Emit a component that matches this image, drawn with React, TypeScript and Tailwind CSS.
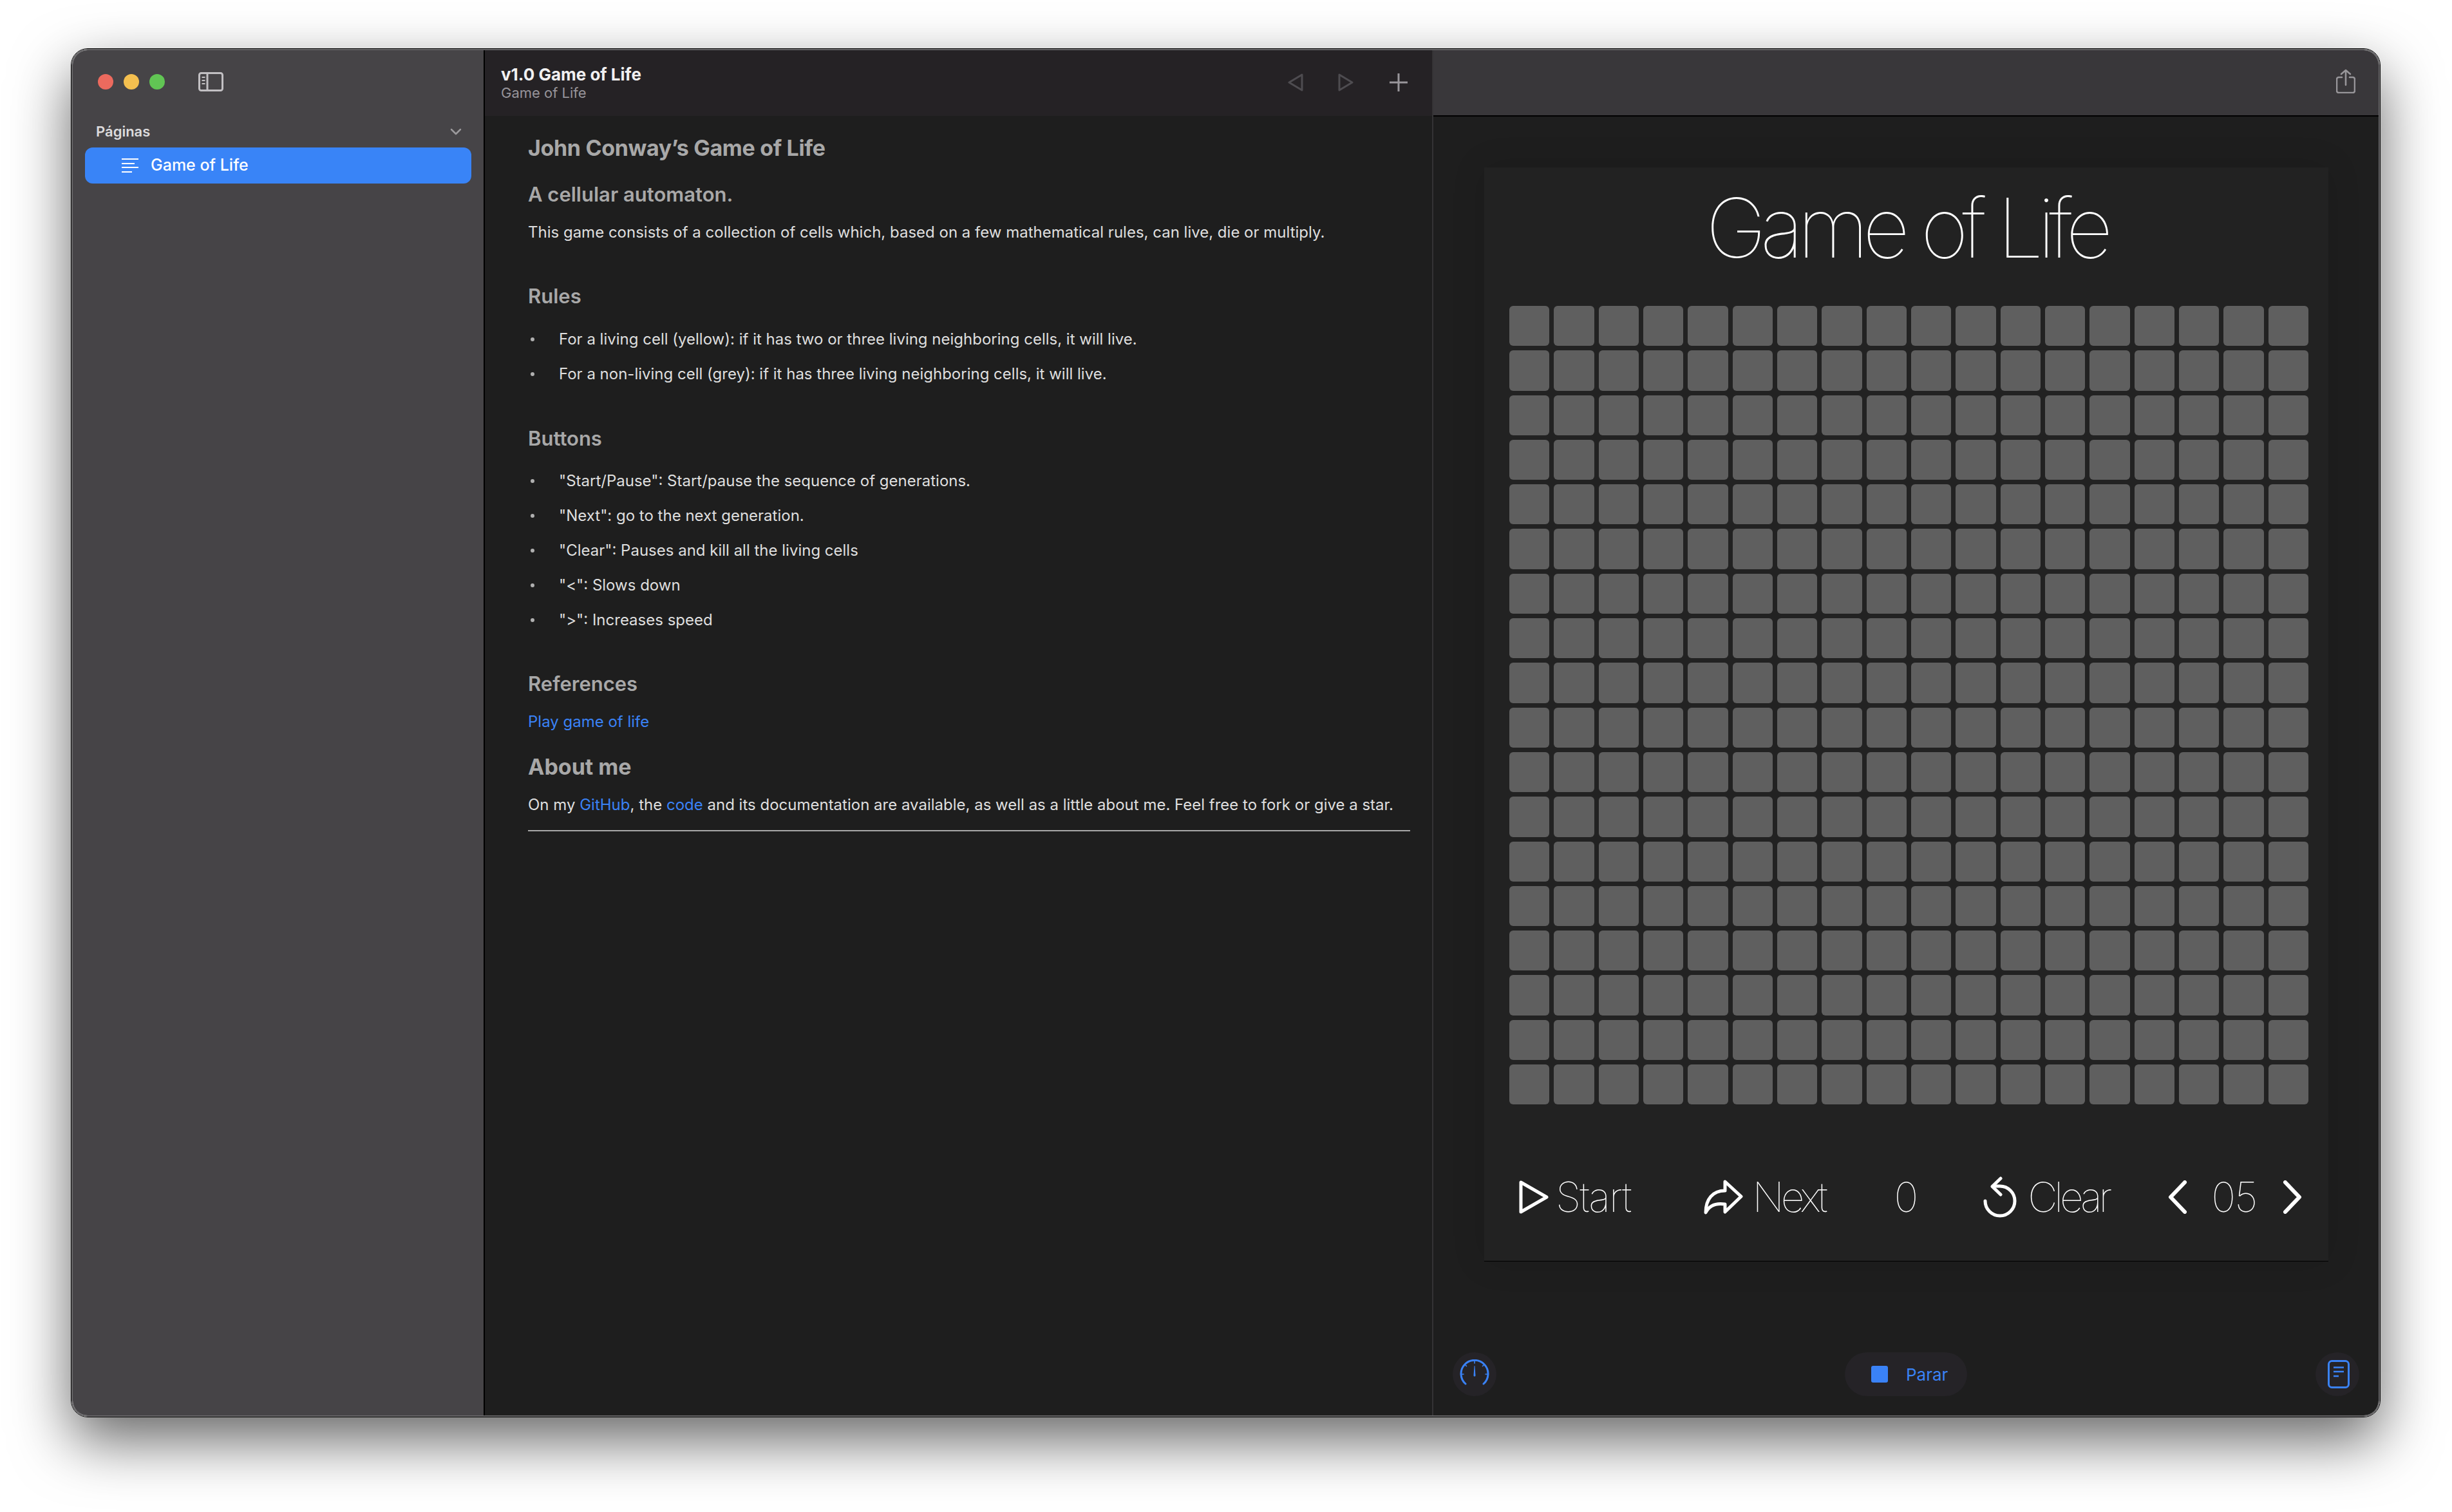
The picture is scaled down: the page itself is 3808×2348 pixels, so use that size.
const bullets1 = [
  "For a living cell (yellow): if it has two or three living neighboring cells, it will live.",
  "For a non-living cell (grey): if it has three living neighboring cells, it will live.",
];

const bullets2 = [
  '"Start/Pause": Start/pause the sequence of generations.',
  '"Next": go to the next generation.',
  '"Clear": Pauses and kill all the living cells',
  '"<": Slows down',
  '">": Increases speed',
];

const cells = Array.from({ length: 18 * 18 }, (_, i) => i);

const BulletList = ({ items, className }: { items: string[]; className: string }) => (
  <ul className={className}>
    {items.map((item) => (
      <li key={item} className="flex items-center h-[54px]">
        <span className="w-[6px] h-[6px] ml-[4px] rounded-full bg-[#b0b0b0]" />
        <span className="ml-[38px]">{item}</span>
      </li>
    ))}
  </ul>
);

const Sidebar = () => (
  <div className="w-[640px] shrink-0 bg-[#464447] border-r-[2px] border-black flex flex-col">
    <div className="flex items-center h-[30px] mt-[34px] ml-[39px]">
      <span className="w-[24px] h-[24px] rounded-full bg-[#ec6a5e]" />
      <span className="w-[24px] h-[24px] rounded-full bg-[#f4bf4f] ml-[16px]" />
      <span className="w-[24px] h-[24px] rounded-full bg-[#61c554] ml-[16px]" />
      <svg className="ml-[52px]" width="39" height="30" viewBox="0 0 39 30" fill="none" stroke="#c2c0c3" strokeWidth="3">
        <rect x="1.5" y="1.5" width="36" height="27" rx="3" />
        <path d="M14 2v26" />
        <path d="M5.5 8h5M5.5 13h5M5.5 18h5" strokeWidth="2" />
      </svg>
    </div>
    <div className="flex items-center justify-between mt-[50px] ml-[36px] mr-[34px] h-[24px]">
      <span className="text-[22px] font-semibold text-[#dcdbdc]">Páginas</span>
      <svg width="18" height="11" viewBox="0 0 18 11" fill="none" stroke="#9b999c" strokeWidth="2.5" strokeLinecap="round" strokeLinejoin="round">
        <path d="M2 2l7 7 7-7" />
      </svg>
    </div>
    <div className="flex items-center h-[56px] mt-[13px] mx-[19px] rounded-[12px] bg-[#3984f7] pl-[57px]">
      <svg width="26" height="22" viewBox="0 0 26 22" fill="none" stroke="#ffffff" strokeWidth="2">
        <path d="M0 1h26M0 8h20M0 14h26M0 21h16" />
      </svg>
      <span className="ml-[19px] text-[25px] font-medium text-white">Game of Life</span>
    </div>
  </div>
);

const Doc = () => (
  <div className="w-[1473px] shrink-0 flex flex-col border-r-[2px] border-[#343335]">
    <div className="h-[102px] bg-[#252225] flex items-center justify-between pl-[25px] pr-[38px]">
      <div className="flex flex-col">
        <span className="text-[26px] leading-[30px] font-bold text-[#f1f0f1]">v1.0 Game of Life</span>
        <span className="text-[22px] leading-[27px] text-[#97949a]">Game of Life</span>
      </div>
      <div className="flex items-center -mt-[3px]">
        <svg width="24" height="28" viewBox="0 0 24 28" fill="none" stroke="#4e4c50" strokeWidth="3" strokeLinejoin="round">
          <path d="M22 2v24L2 14z" />
        </svg>
        <svg className="ml-[54px]" width="24" height="28" viewBox="0 0 24 28" fill="none" stroke="#4e4c50" strokeWidth="3" strokeLinejoin="round">
          <path d="M2 2v24l20-12z" />
        </svg>
        <svg className="ml-[56px]" width="28" height="28" viewBox="0 0 28 28" fill="none" stroke="#99969b" strokeWidth="3">
          <path d="M14 0v28M0 14h28" />
        </svg>
      </div>
    </div>
    <div className="flex-1 bg-[#1e1e1e] pl-[67px] pr-[34px] pt-[30px] text-[24px] leading-[40px] text-[#dfdfdf]">
      <h1 className="text-[34px] font-bold tracking-[-0.01em] text-[#a8a8a8]">John Conway’s Game of Life</h1>
      <h3 className="mt-[32px] text-[31px] font-semibold text-[#a8a8a8]">A cellular automaton.</h3>
      <p className="mt-[19px]">
        This game consists of a collection of cells which, based on a few mathematical rules, can live, die or multiply.
      </p>
      <h3 className="mt-[59px] text-[31px] font-semibold text-[#a8a8a8]">Rules</h3>
      <BulletList items={bullets1} className="mt-[20px]" />
      <h3 className="mt-[53px] text-[31px] font-semibold text-[#a8a8a8]">Buttons</h3>
      <BulletList items={bullets2} className="mt-[19px]" />
      <h3 className="mt-[52px] text-[31px] font-semibold text-[#a8a8a8]">References</h3>
      <p className="mt-[19px] text-[#3a82f6]">Play game of life</p>
      <h2 className="mt-[30px] text-[34px] font-bold text-[#a8a8a8]">About me</h2>
      <p className="mt-[19px]">
        On my <span className="text-[#3a82f6]">GitHub</span>, the <span className="text-[#3a82f6]">code</span> and its
        documentation are available, as well as a little about me. Feel free to fork or give a star.
      </p>
      <div className="mt-[19px] h-[2px] bg-[#a8a8a8]" />
    </div>
  </div>
);

const Controls = () => (
  <div className="flex items-center h-[100px] mt-[94px] ml-[54px] text-[64px] font-thin text-white">
    <svg width="46" height="52" viewBox="0 0 46 52" fill="none" stroke="#ffffff" strokeWidth="5" strokeLinejoin="round">
      <path d="M3 3v46l40-23z" />
    </svg>
    <span className="ml-[11px] tracking-[-0.03em]">Start</span>
    <svg className="ml-[114px]" width="61" height="54" viewBox="0 0 61 54" fill="none" stroke="#ffffff" strokeWidth="5" strokeLinejoin="round" strokeLinecap="round">
      <path d="M33 3l25 23-25 24V38C20 36 9 39 3 51 3 30 14 17 33 17z" />
    </svg>
    <span className="ml-[14px] tracking-[-0.08em]">Next</span>
    <span className="ml-[108px] tracking-[-0.05em]">0</span>
    <svg className="ml-[104px]" width="52" height="64" viewBox="0 0 52 64" fill="none" stroke="#ffffff" strokeWidth="5" strokeLinecap="round" strokeLinejoin="round">
      <path d="M27 3L14 15.5 27 28" />
      <path d="M15 15h11a23 23 0 1 1-23 23" />
    </svg>
    <span className="ml-[17px] tracking-[-0.08em]">Clear</span>
    <svg className="ml-[92px]" width="30" height="52" viewBox="0 0 30 52" fill="none" stroke="#ffffff" strokeWidth="6" strokeLinecap="round" strokeLinejoin="round">
      <path d="M26 3L4 26l22 23" />
    </svg>
    <span className="ml-[37px] tracking-[-0.03em]">05</span>
    <svg className="ml-[41px]" width="30" height="52" viewBox="0 0 30 52" fill="none" stroke="#ffffff" strokeWidth="6" strokeLinecap="round" strokeLinejoin="round">
      <path d="M4 3l22 23L4 49" />
    </svg>
  </div>
);

const Preview = () => (
  <div className="flex-1 flex flex-col min-w-0">
    <div className="h-[103px] bg-[#39373a] border-b-[2px] border-black flex items-center justify-end pr-[36px] pb-[5px]">
      <svg width="30" height="38" viewBox="0 0 30 38" fill="none" stroke="#98969a" strokeWidth="2.6" strokeLinecap="round" strokeLinejoin="round">
        <path d="M15 25V2M8 8l7-6 7 6" />
        <path d="M9 13H4a3 3 0 0 0-3 3v18a3 3 0 0 0 3 3h22a3 3 0 0 0 3-3V16a3 3 0 0 0-3-3h-5" />
      </svg>
    </div>
    <div className="flex-1 bg-[#1e1e1e] flex flex-col">
      <div className="flex flex-col h-[1699px] mt-[79px] ml-[79px] mr-[78px] bg-[#222222] border-b border-black shadow-[0_0_50px_rgba(0,0,0,0.12)]">
        <div className="h-[188px] leading-[188px] text-center text-[128px] font-thin tracking-[-0.075em] text-white">
          Game of Life
        </div>
        <div className="grid grid-cols-[repeat(18,1fr)] gap-[7px] w-[1241px] ml-[39px] mt-[27px]">
          {cells.map((cell) => (
            <div key={cell} className="h-[62.3px] rounded-[6px] bg-[#5f5f5f]" />
          ))}
        </div>
        <Controls />
      </div>
      <div className="flex items-center justify-between mt-[141px] px-[30px]">
        <div className="w-[68px] h-[68px] rounded-full bg-[#252327] flex items-center justify-center">
          <svg width="46" height="46" viewBox="0 0 46 46" fill="none" stroke="#3a82f6" strokeWidth="3" strokeLinecap="round">
            <path d="M9 38A21 21 0 1 1 37 38" />
            <path d="M23 2v4M8.2 8.2l2.2 2.2M37.8 8.2l-2.2 2.2M2 23h4M44 23h-4" strokeWidth="1.6" />
            <path d="M22.6 10h.8l1.1 15a1.5 1.5 0 0 1-3 0z" fill="#3a82f6" stroke="none" />
          </svg>
        </div>
        <div className="w-[190px] h-[68px] rounded-full bg-[#252327] flex items-center pl-[41px]">
          <span className="w-[26px] h-[26px] rounded-[3px] bg-[#3a82f6]" />
          <span className="ml-[28px] text-[26px] text-[#3a82f6]">Parar</span>
        </div>
        <div className="w-[68px] h-[68px] rounded-full bg-[#252327] flex items-center justify-center">
          <svg className="ml-[3px]" width="34" height="44" viewBox="0 0 34 44" fill="none" stroke="#3a82f6" strokeWidth="3" strokeLinecap="round">
            <rect x="1.5" y="1.5" width="31" height="41" rx="5" />
            <path d="M9 11.500h16M9 18h16M9 25h8" strokeWidth="2.400" strokeLinecap="butt" />
          </svg>
        </div>
      </div>
    </div>
  </div>
);

export default function App() {
  return (
    <div className="w-[3808px] h-[2348px] bg-white pl-[110px] pt-[75px] overflow-hidden font-['Inter','Liberation_Sans',sans-serif]">
      <div className="w-[3587px] h-[2126px] rounded-[26px] border border-black shadow-[0_36px_90px_rgba(0,0,0,0.6)]">
        <div className="h-full rounded-[25px] border-[2px] border-[#676668] overflow-hidden flex">
          <Sidebar />
          <Doc />
          <Preview />
        </div>
      </div>
    </div>
  );
}
